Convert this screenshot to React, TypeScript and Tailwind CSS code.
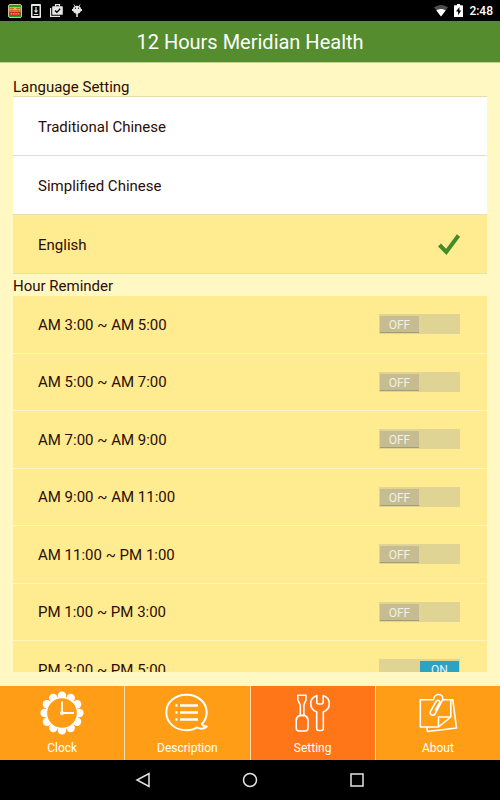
import { useState } from "react";
import type { ReactNode } from "react";

const languages = ["Traditional Chinese", "Simplified Chinese", "English"];

const hours = [
  "AM 3:00 ~ AM 5:00",
  "AM 5:00 ~ AM 7:00",
  "AM 7:00 ~ AM 9:00",
  "AM 9:00 ~ AM 11:00",
  "AM 11:00 ~ PM 1:00",
  "PM 1:00 ~ PM 3:00",
  "PM 3:00 ~ PM 5:00",
];

function AppBadge() {
  return (
    <svg width="14" height="14" viewBox="0 0 14 14" aria-hidden="true">
      <rect x="0.5" y="0.5" width="13" height="13" rx="1.5" fill="#1fa01c" stroke="#c9c4a0" />
      <rect x="1.5" y="3" width="11" height="4.5" fill="#e8b840" />
      <rect x="1.5" y="8" width="11" height="3.5" fill="#c8281c" />
      <path d="M2 4.5h4M8 4.5h4M2 6.5h10M4 3.5v4M10 3.5v4" stroke="#c8502c" strokeWidth="0.7" />
      <path d="M2.5 9.7h9" stroke="#f0a13c" strokeWidth="1.4" strokeDasharray="1.6 0.8" />
    </svg>
  );
}

function DownloadIcon() {
  return (
    <svg width="10" height="14" viewBox="0 0 10 14" aria-hidden="true">
      <rect width="10" height="14" rx="1" fill="#e6e6e6" />
      <rect x="1.5" y="2" width="7" height="10" fill="#000" />
      <path d="M4.4 3h1.2v3.6h1.7L5 9 2.7 6.6h1.7zM2.7 10h4.6v1H2.7z" fill="#e6e6e6" />
    </svg>
  );
}

function StoreIcon() {
  return (
    <svg width="13" height="13" viewBox="0 0 13 13" aria-hidden="true">
      <path d="M0.6 4v8.4H10" fill="none" stroke="#e6e6e6" strokeWidth="1.2" />
      <path d="M5.5 2.5V0.6h4v1.9" fill="none" stroke="#e6e6e6" strokeWidth="1.2" />
      <rect x="2.2" y="2.2" width="10.6" height="8.6" rx="0.6" fill="#e6e6e6" />
      <path d="M5 6.5l1.8 1.8 3.4-3.6" fill="none" stroke="#000" strokeWidth="1.3" />
    </svg>
  );
}

function DroidIcon() {
  return (
    <svg width="10" height="14" viewBox="0 0 10 14" aria-hidden="true">
      <path d="M1.8 0.4L3 2.4M8.2 0.4L7 2.4" stroke="#e6e6e6" strokeWidth="0.8" />
      <path d="M1 4.8C1 0.8 9 0.8 9 4.8V6c0 2-1.5 3.4-3.2 3.8V13H4.2V9.8C2.5 9.4 1 8 1 6z" fill="#e6e6e6" />
      <path d="M0 5h1.5v2H0zM8.5 5H10v2H8.5z" fill="#e6e6e6" />
      <circle cx="3.5" cy="4.2" r="0.6" fill="#000" />
      <circle cx="6.5" cy="4.2" r="0.6" fill="#000" />
    </svg>
  );
}

function WifiIcon() {
  return (
    <svg width="14" height="12" viewBox="0 0 14 12" aria-hidden="true">
      <path d="M0 2.6C4-0.8 10-0.8 14 2.6L7 11.5z" fill="#4c4c4c" />
      <path d="M2.4 5.4c2.6-2 6.600-2 9.200 0L7 11.5z" fill="#fff" />
    </svg>
  );
}

function BatteryIcon() {
  return (
    <svg width="9" height="13" viewBox="0 0 9 13" aria-hidden="true">
      <path d="M3 0h3v1.3h2.4q0.6 0 0.6 0.6V12.4q0 0.6-0.6 0.6H0.6Q0 13 0 12.4V1.9q0-0.6 0.6-0.6H3z" fill="#fff" />
      <path d="M5.4 3L2 7.6h2.1v3.6L7.2 6.5H5.4z" fill="#000" />
    </svg>
  );
}

function ClockIcon() {
  const petals = Array.from({ length: 12 }, (_, i) => (i * Math.PI) / 6);
  return (
    <svg width="44" height="44" viewBox="0 0 44 44" aria-hidden="true">
      {petals.map((a) => (
        <circle key={a} cx={22 + 17.4 * Math.cos(a)} cy={22 + 17.4 * Math.sin(a)} r="4.2" fill="#fff" />
      ))}
      <circle cx="22" cy="22" r="15.6" fill="#ff9e16" stroke="#fff" strokeWidth="1.5" />
      <path d="M22 10.5V22h12" fill="none" stroke="#fff" strokeWidth="1.8" />
      <circle cx="22" cy="22" r="2" fill="#fff" />
    </svg>
  );
}

function DescriptionIcon() {
  return (
    <svg width="44" height="44" viewBox="0 0 44 44" fill="none" stroke="#fff" aria-hidden="true">
      <path
        d="M32 36.5C29 38.5 25.5 39.3 21.5 39.3C10 39.3 1.3 31.5 1.3 21.3S10 3.8 21.5 3.8S41.7 11.5 41.7 21.3C41.7 26 40 30 37 33C37.8 34.8 39.5 35.6 41.8 35.5C39 38 35 38.2 32 36.5z"
        strokeWidth="2"
        strokeLinejoin="round"
      />
      <path d="M15 14.5h18M15 21.5h18M15 28.5h18" strokeWidth="2.6" />
      <path d="M10.5 14.5h2M10.5 21.5h2M10.5 28.5h2" strokeWidth="2.4" />
    </svg>
  );
}

function SettingIcon() {
  return (
    <svg width="44" height="44" viewBox="0 0 44 44" fill="none" stroke="#fff" strokeWidth="1.6" strokeLinejoin="round" aria-hidden="true">
      <path d="M6.8 4.2h8.2V9L12.9 14V24.5H9.3V14L6.8 9z" />
      <path d="M8.5 24.5h5.2Q17 26 17 29.5V37q0 3-3 3H8.200q-3 0-3-3V29.5Q5.200 26 8.500 24.500z" />
      <path d="M25.8 4.5V11q0 2 2 2h2.4q2 0 2-2V4.5C36.5 6 38.3 9 38.3 12.5C38.3 16.5 36 19.5 32.3 21V37.5q0 2-2 2h-2.6q-2 0-2-2V21C22 19.5 19.7 16.5 19.7 12.5C19.7 9 21.5 6 25.8 4.5z" />
    </svg>
  );
}

function AboutIcon() {
  return (
    <svg width="44" height="44" viewBox="0 0 44 44" fill="none" stroke="#fff" strokeWidth="1.6" strokeLinejoin="round" aria-hidden="true">
      <path d="M17 8.7H4.300V36h18.200L34.800 26V8.700h-8" />
      <path d="M22.5 36V26h12.3" />
      <path d="M35 8.7h1.8L40.5 37 11.5 40.5 10.7 36" />
      <path
        d="M17.500 8.700C18 1.800 28 1.800 26.700 8.700L19 23C17.500 25.500 12.800 23.500 14.500 20.300L20 10.500C21.500 8.300 24.500 9.500 23.500 12L19.500 19"
        strokeLinecap="round"
      />
    </svg>
  );
}

const tabs: { name: string; icon: ReactNode }[] = [
  { name: "Clock", icon: <ClockIcon /> },
  { name: "Description", icon: <DescriptionIcon /> },
  { name: "Setting", icon: <SettingIcon /> },
  { name: "About", icon: <AboutIcon /> },
];

function Toggle({ id, checked, onChange }: { id: string; checked: boolean; onChange: () => void }) {
  return (
    <span className="relative mb-px flex h-5 w-[81px] bg-[#e0d494] p-px pt-[2px]">
      <input
        id={id}
        type="checkbox"
        role="switch"
        checked={checked}
        onChange={onChange}
        className="absolute inset-0 m-0 h-full w-full cursor-pointer appearance-none"
      />
      <span
        aria-hidden="true"
        className={
          checked
            ? "ml-auto h-[17px] w-[39px] border-b border-[#1c87a5] bg-[#2ba4c4] text-center text-xs leading-[18px] text-[#eaf6f8]"
            : "h-[17px] w-[39px] border-b border-[#a29c78] bg-[#c5bc91] text-center text-xs leading-[18px] text-[#f3f0e4]"
        }
      >
        {checked ? "ON" : "OFF"}
      </span>
    </span>
  );
}

export default function App() {
  const [language, setLanguage] = useState("English");
  const [enabled, setEnabled] = useState<string[]>(["PM 3:00 ~ PM 5:00"]);
  const [tab, setTab] = useState("Setting");

  const toggle = (hour: string) =>
    setEnabled((list) => (list.includes(hour) ? list.filter((h) => h !== hour) : [...list, hour]));

  return (
    <div className="flex h-screen flex-col bg-[#fff8c2] font-[Roboto,sans-serif] text-[15px] text-[#2b0d05]">
      <div className="flex h-[21px] shrink-0 items-center justify-between bg-black pr-[7px] pl-2">
        <div className="flex items-center gap-[7px]">
          <AppBadge />
          <span className="flex w-[14px] justify-center">
            <DownloadIcon />
          </span>
          <StoreIcon />
          <span className="flex w-[14px] justify-center">
            <DroidIcon />
          </span>
        </div>
        <div className="flex items-center gap-[6px] text-xs font-medium text-white">
          <WifiIcon />
          <BatteryIcon />
          <span>2:48</span>
        </div>
      </div>

      <header className="flex h-[42px] shrink-0 items-center justify-center border-b border-[#c3cc93] bg-[#548c2e]">
        <h1 className="text-xl text-white">12 Hours Meridian Health</h1>
      </header>

      <main className="flex min-h-0 flex-1 flex-col px-[13px] pt-[14px] pb-[14px]">
        <h2 className="h-[19px] leading-5">Language Setting</h2>
        <div role="radiogroup" aria-label="Language Setting" className="border-t border-[#e3dcae]">
          {languages.map((name) => (
            <label
              key={name}
              className="flex h-[59px] cursor-pointer items-center justify-between border-b border-[#e6dfb8] bg-white pt-[2px] pr-[26px] pl-[25px] has-checked:bg-[#ffeb90]"
            >
              <span>{name}</span>
              <input
                type="radio"
                name="language"
                checked={language === name}
                onChange={() => setLanguage(name)}
                className="peer sr-only"
              />
              <svg
                width="24"
                height="22"
                viewBox="0 0 24 22"
                aria-hidden="true"
                className="hidden peer-checked:block"
              >
                <path d="M2.5 11L9.3 18L21.5 1.5" fill="none" stroke="#468a28" strokeWidth="4" />
              </svg>
            </label>
          ))}
        </div>

        <h2 className="h-[22px] shrink-0 leading-6">Hour Reminder</h2>
        <ul className="min-h-0 flex-1 overflow-hidden">
          {hours.map((hour) => (
            <li
              key={hour}
              className="flex items-center justify-between border-b border-[#fff6bd] bg-[#ffeb90] pr-[27px] pl-[25px] odd:h-[58px] even:h-[57px]"
            >
              <label htmlFor={hour} className="leading-6">{hour}</label>
              <Toggle id={hour} checked={enabled.includes(hour)} onChange={() => toggle(hour)} />
            </li>
          ))}
        </ul>
      </main>

      <nav className="grid h-[74px] shrink-0 grid-cols-4 gap-px bg-[#ffdcae]">
        {tabs.map(({ name, icon }) => (
          <button
            key={name}
            type="button"
            aria-current={tab === name ? "page" : undefined}
            onClick={() => setTab(name)}
            className="flex cursor-pointer flex-col items-center bg-[#ff9e16] pt-[5px] text-xs leading-[26px] text-white aria-[current=page]:bg-[#ff7618]"
          >
            {icon}
            {name}
          </button>
        ))}
      </nav>

      <div className="flex h-10 shrink-0 items-center justify-center gap-[89px] bg-black">
        <button type="button" aria-label="Back" className="flex w-[18px] cursor-pointer justify-center">
          <svg width="16" height="16" viewBox="0 0 16 16" fill="none" stroke="#e4e4e4" strokeWidth="1.5" aria-hidden="true">
            <path d="M14 1.5v13L2 8z" />
          </svg>
        </button>
        <button type="button" aria-label="Home" className="flex w-[18px] cursor-pointer justify-center">
          <svg width="16" height="16" viewBox="0 0 16 16" fill="none" stroke="#e4e4e4" strokeWidth="1.5" aria-hidden="true">
            <circle cx="8" cy="8" r="6.5" />
          </svg>
        </button>
        <button type="button" aria-label="Recent apps" className="flex w-[18px] cursor-pointer justify-center">
          <svg width="16" height="16" viewBox="0 0 16 16" fill="none" stroke="#e4e4e4" strokeWidth="1.5" aria-hidden="true">
            <rect x="2" y="2" width="12" height="12" />
          </svg>
        </button>
      </div>
    </div>
  );
}
